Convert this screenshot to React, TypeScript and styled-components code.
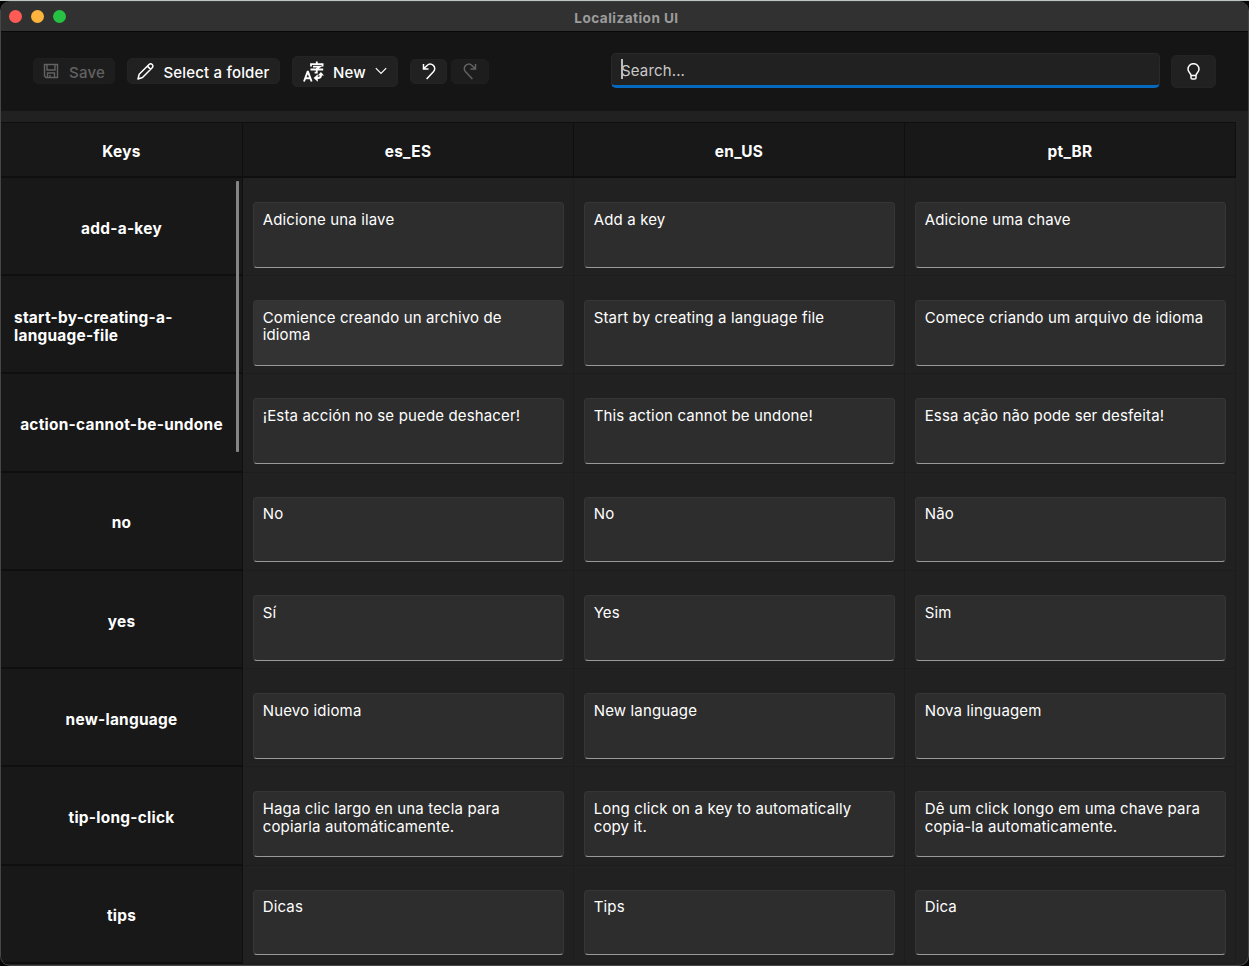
import React from 'react';
import styled, { createGlobalStyle } from 'styled-components';

const GlobalStyle = createGlobalStyle`
  * { box-sizing: border-box; }
  html, body { margin: 0; background: #050505; }
  body { overflow: hidden; font-family: Inter, "Liberation Sans", sans-serif; color: #fff; }
`;

const Desktop = styled.div`
  width: 1249px;
  height: 966px;
  overflow: hidden;
  background: linear-gradient(#bfc6c2 0 1px, #050505 1px);
`;

const Window = styled.div`
  display: flex;
  flex-direction: column;
  width: 1249px;
  height: 965px;
  margin-top: 1px;
  border: 1px solid #464646;
  border-top-color: #3d3d3d;
  border-radius: 10px;
  background: #212121;
  overflow: hidden;
`;

const TitleBar = styled.header`
  display: grid;
  grid-template-columns: 1fr auto 1fr;
  align-items: center;
  flex: none;
  height: 30px;
  padding: 0 8px;
  background: #313131;
  border-bottom: 1px solid #080808;
`;

const Lights = styled.div`
  display: flex;
  gap: 9px;
  padding-bottom: 1px;
`;

const Light = styled.i<{ $color: string }>`
  width: 13px;
  height: 13px;
  border-radius: 50%;
  background: ${(p) => p.$color};
`;

const Title = styled.div`
  padding: 3px 0 0 4px;
  font-size: 13.6px;
  font-weight: 700;
  letter-spacing: 0.45px;
  color: #9c9c9c;
`;

const Toolbar = styled.div`
  display: flex;
  align-items: center;
  flex: none;
  height: 79px;
  padding: 0 32px 1px 32px;
  background: #151515;
`;

const Button = styled.button<{ $w: number; $h: number; $gap?: number; $ml?: number; $off?: boolean }>`
  display: flex;
  align-items: center;
  justify-content: center;
  flex: none;
  gap: ${(p) => p.$gap ?? 0}px;
  width: ${(p) => p.$w}px;
  height: ${(p) => p.$h}px;
  margin: 0 0 0 ${(p) => p.$ml ?? 0}px;
  padding: 0;
  border: 1px solid ${(p) => (p.$off ? '#1f1f1f' : '#232323')};
  border-radius: 5px;
  background: ${(p) => (p.$off ? '#1d1d1d' : '#212121')};
  color: ${(p) => (p.$off ? '#626262' : '#fff')};
  font: 500 15px/20px Inter, sans-serif;
  letter-spacing: 0.18px;
  white-space: nowrap;
  svg { display: block; flex: none; }
`;

const Label = styled.span`
  padding-top: 3px;
`;

const Search = styled.div`
  display: flex;
  align-items: center;
  width: 549px;
  height: 35px;
  margin: 0 0 2px auto;
  padding: 2px 9px 0;
  border: 1px solid #292929;
  border-bottom: 3px solid #0568bd;
  border-radius: 5px;
  background: #212121;
  color: #c9c9c9;
  font-size: 15px;
  letter-spacing: 0.15px;
`;

const Caret = styled.i`
  width: 2px;
  height: 20px;
  margin: -3px -2px 0 0;
  background: #bbb;
`;

const HeaderRow = styled.div`
  display: flex;
  flex: none;
  height: 55.75px;
  margin-top: 11px;
`;

const HeadCell = styled.div<{ $w: number }>`
  display: flex;
  align-items: center;
  justify-content: center;
  width: ${(p) => p.$w}px;
  padding-top: 4px;
  border: solid #0f0f0f;
  border-width: 1px 1px 2px 0;
  background: #181818;
  font-size: 15.4px;
  font-weight: 700;
  letter-spacing: 0.3px;
`;

const Body = styled.div`
  display: flex;
  flex: none;
`;

const KeyColumn = styled.div`
  position: relative;
  width: 242px;
`;

const ScrollThumb = styled.i`
  position: absolute;
  top: 3px;
  right: 4px;
  width: 3px;
  height: 271px;
  border-radius: 1px;
  background: #858585;
`;

const KeyCell = styled.div`
  display: flex;
  align-items: center;
  justify-content: center;
  height: 98.25px;
  padding: 5px 13px 0 13px;
  border-right: 1px solid #0f0f0f;
  border-bottom: 2px solid #0f0f0f;
  background: #181818;
  font-size: 15.4px;
  line-height: 17.7px;
  font-weight: 700;
  letter-spacing: 0.27px;
`;

const Column = styled.div`
  width: 331px;
  border-right: 1px solid #1d1d1d;
`;

const Cell = styled.div`
  height: 98.25px;
  padding: 24px 9px 0 10px;
  border-bottom: 1px solid #1d1d1d;
`;

const Field = styled.div<{ $hover?: boolean }>`
  height: 65.8px;
  padding: 7.75px 4px 0 8.7px;
  border: 1px solid #363636;
  border-bottom-color: #999;
  border-radius: 4px;
  background: ${(p) => (p.$hover ? '#333' : '#2d2d2d')};
  font-size: 15px;
  line-height: 17.7px;
  letter-spacing: 0.15px;
  white-space: pre-line;
`;

const SaveIcon = () => (
  <svg width="16" height="16" viewBox="0 0 16 16" fill="none" stroke="currentColor" strokeWidth="1.4">
    <path d="M1.500 1.500h13v13h-11.500l-1.500-1.500zM4 1.500v5.500h8v-5.500M4.500 14.500v-4.500h7v4.500M7 14.500v-2.500" />
  </svg>
);

const PencilIcon = () => (
  <svg width="17" height="17" viewBox="0 0 17 17" fill="none" stroke="currentColor" strokeWidth="1.5" strokeLinejoin="round">
    <path d="M1 16l1.200-4.700L12 1.500c1-1 2.300-.9 3.200 0s1 2.200 0 3.200L5.500 14.500zM10.400 3.100l3.300 3.300" />
  </svg>
);

const TranslateIcon = () => (
  <svg width="21" height="21" viewBox="0 0 21 21" fill="none" stroke="currentColor">
    <path strokeWidth="1.900" d="M1 20.500L4.600 10.800h.4L8.600 20.500M2.300 17.200h5" />
    <path strokeWidth="1.800" d="M13.800 .5v2.500M8 5.500v-2.300h11.600v2.300M10 5.700h6.800l-3 2v4h-2.200M7.500 8.500h12.700" />
    <path strokeWidth="2" d="M18 12.500v1.500q0 3-3 3h-2" />
    <path stroke="none" fill="currentColor" d="M14.800 13.300v7.400l-4.200-3.700zM14.800 14.400h6.200l-3.100-3.400z" />
  </svg>
);

const ChevronIcon = () => (
  <svg width="12" height="8" viewBox="0 0 12 8" fill="none" stroke="currentColor" strokeWidth="1.200">
    <path d="M.8 1.200L6 6.500l5.200-5.300" />
  </svg>
);

const UndoIcon = ({ flip = false }: { flip?: boolean }) => (
  <svg width="14" height="17" viewBox="0 0 14 17" fill="none" stroke="currentColor" strokeWidth="1.500">
    <path
      transform={flip ? 'translate(14 0) scale(-1 1)' : undefined}
      d="M1.500 1v5h5M1.700 5.800L4.800 2.700c2-2 4.600-2 6.500-.3s1.900 4.500.1 6.400L4.600 16"
    />
  </svg>
);

const BulbIcon = () => (
  <svg width="13" height="17" viewBox="0 0 13 17" fill="none" stroke="currentColor" strokeWidth="1.500">
    <path d="M4 12.500c0-2-3-3.200-3-6.300a5.500 5.500 0 0 1 11 0c0 3.100-3 4.300-3 6.300zM4 12.500v2.200q0 1.300 1.300 1.300h2.400q1.300 0 1.300-1.300v-2.200" />
  </svg>
);

const keys = [
  'add-a-key',
  'start-by-creating-a-language-file',
  'action-cannot-be-undone',
  'no',
  'yes',
  'new-language',
  'tip-long-click',
  'tips',
];

const languages = [
  {
    name: 'es_ES',
    values: ['Adicione una ilave', 'Comience creando un archivo de\nidioma', '¡Esta acción no se puede deshacer!', 'No', 'Sí', 'Nuevo idioma', 'Haga clic largo en una tecla para\ncopiarla automáticamente.', 'Dicas'],
  },
  {
    name: 'en_US',
    values: ['Add a key', 'Start by creating a language file', 'This action cannot be undone!', 'No', 'Yes', 'New language', 'Long click on a key to automatically\ncopy it.', 'Tips'],
  },
  {
    name: 'pt_BR',
    values: ['Adicione uma chave', 'Comece criando um arquivo de idioma', 'Essa ação não pode ser desfeita!', 'Não', 'Sim', 'Nova linguagem', 'Dê um click longo em uma chave para\ncopia-la automaticamente.', 'Dica'],
  },
];

export default function App() {
  return (
    <Desktop>
      <GlobalStyle />
      <Window>
        <TitleBar>
          <Lights>
            <Light $color="#ff5b55" />
            <Light $color="#fcb43e" />
            <Light $color="#27c244" />
          </Lights>
          <Title>Localization UI</Title>
        </TitleBar>
        <Toolbar>
          <Button $w={82} $h={26} $gap={10} $off><SaveIcon /><Label>Save</Label></Button>
          <Button $w={153} $h={26} $gap={9} $ml={12}><PencilIcon /><Label>Select a folder</Label></Button>
          <Button $w={106} $h={31} $gap={9} $ml={12}><TranslateIcon /><Label>New</Label><ChevronIcon /></Button>
          <Button $w={37} $h={25} $ml={12}><UndoIcon /></Button>
          <Button $w={38} $h={25} $ml={4} $off><UndoIcon flip /></Button>
          <Search><Caret />Search...</Search>
          <Button $w={45} $h={33} $ml={11}><BulbIcon /></Button>
        </Toolbar>
        <HeaderRow>
          <HeadCell $w={242}>Keys</HeadCell>
          {languages.map((l) => <HeadCell key={l.name} $w={331}>{l.name}</HeadCell>)}
        </HeaderRow>
        <Body>
          <KeyColumn>
            {keys.map((k) => <KeyCell key={k}>{k}</KeyCell>)}
            <ScrollThumb />
          </KeyColumn>
          {languages.map((l, c) => (
            <Column key={l.name}>
              {l.values.map((v, r) => (
                <Cell key={keys[r]}><Field $hover={c === 0 && r === 1}>{v}</Field></Cell>
              ))}
            </Column>
          ))}
        </Body>
      </Window>
    </Desktop>
  );
}
